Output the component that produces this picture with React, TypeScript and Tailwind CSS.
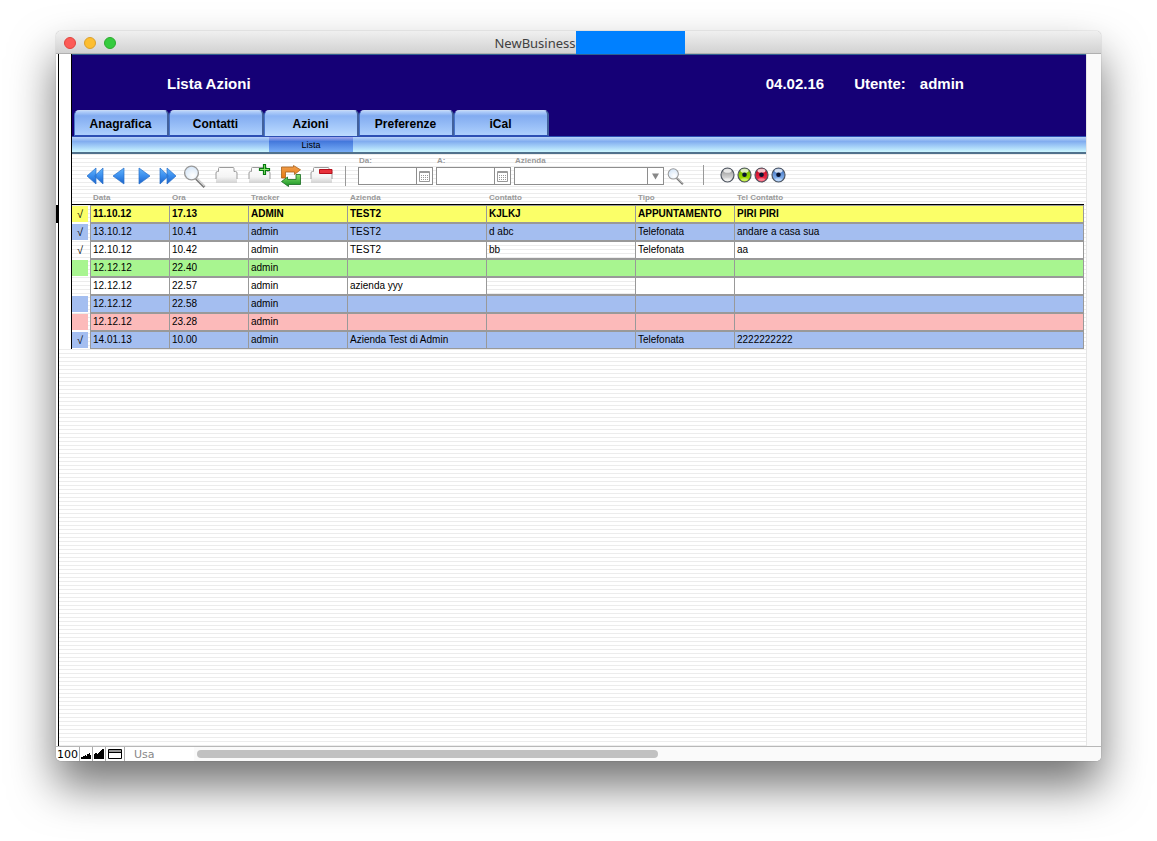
import React from "react";

type Tone = "yellow" | "blue" | "green" | "red" | "none";

interface Row {
  done: boolean;
  tone: Tone;
  cells: string[];
}

const rows: Row[] = [
  { done: true, tone: "yellow", cells: ["11.10.12", "17.13", "ADMIN", "TEST2", "KJLKJ", "APPUNTAMENTO", "PIRI PIRI"] },
  { done: true, tone: "blue", cells: ["13.10.12", "10.41", "admin", "TEST2", "d abc", "Telefonata", "andare a casa sua"] },
  { done: true, tone: "none", cells: ["12.10.12", "10.42", "admin", "TEST2", "bb", "Telefonata", "aa"] },
  { done: false, tone: "green", cells: ["12.12.12", "22.40", "admin", "", "", "", ""] },
  { done: false, tone: "none", cells: ["12.12.12", "22.57", "admin", "azienda yyy", "", "", ""] },
  { done: false, tone: "blue", cells: ["12.12.12", "22.58", "admin", "", "", "", ""] },
  { done: false, tone: "red", cells: ["12.12.12", "23.28", "admin", "", "", "", ""] },
  { done: true, tone: "blue", cells: ["14.01.13", "10.00", "admin", "Azienda Test di Admin", "", "Telefonata", "2222222222"] },
];

const tones: Record<Tone, string> = {
  yellow: "bg-[#fbff68]",
  blue: "bg-[#a4bef0]",
  green: "bg-[#a8f590]",
  red: "bg-[#fcbaba]",
  none: "bg-white",
};

const stripes = "bg-[repeating-linear-gradient(to_bottom,#ececec_0px,#ececec_1px,#ffffff_1px,#ffffff_4px)]";
const tabs = ["Anagrafica", "Contatti", "Azioni", "Preferenze", "iCal"];
const headings = ["Data", "Ora", "Tracker", "Azienda", "Contatto", "Tipo", "Tel Contatto"];

function Arrow({ d, label, width, className }: { d: string; label: string; width: number; className: string }) {
  return (
    <button type="button" aria-label={label} className={className}>
      <svg width={width} height="18" viewBox={`0 0 ${width} 18`} className="block">
        <defs>
          <linearGradient id="arrowFill" x1="0" y1="0" x2="0" y2="1">
            <stop offset="0" stopColor="#63b4fa" />
            <stop offset="0.5" stopColor="#3a8eee" />
            <stop offset="1" stopColor="#1c62c8" />
          </linearGradient>
        </defs>
        <path d={d} fill="url(#arrowFill)" stroke="#2a70c8" strokeWidth="0.7" />
      </svg>
    </button>
  );
}

function Magnifier({ size }: { size: number }) {
  return (
    <svg width={size} height={size} viewBox="0 0 23 23" className="block">
      <defs>
        <radialGradient id="lens" cx="0.6" cy="0.7" r="0.8">
          <stop offset="0" stopColor="#ffffff" />
          <stop offset="1" stopColor="#cfe2f6" />
        </radialGradient>
      </defs>
      <path d="M13 13.500L21.500 22" stroke="#777" strokeWidth="2.600" />
      <path d="M13.500 13L21.500 21" stroke="#ddd" strokeWidth="1.200" />
      <circle cx="8.500" cy="8" r="6.900" fill="url(#lens)" stroke="#999" strokeWidth="1.400" />
    </svg>
  );
}

function Folder({ kind }: { kind?: "add" | "remove" }) {
  return (
    <svg width="23" height="22" viewBox="0 0 23 22" className="block overflow-visible">
      <defs>
        <linearGradient id="folderFill" x1="0" y1="0" x2="0" y2="1">
          <stop offset="0" stopColor="#fdfdfd" />
          <stop offset="0.6" stopColor="#f4f4f4" />
          <stop offset="1" stopColor="#d2d2d2" />
        </linearGradient>
      </defs>
      <path d="M1 18V8Q1 6.500 2.500 6.500H3.500V3.500Q3.500 2.500 4.500 2.500H18Q19 2.500 19 3.500V6.500H20.500Q22 6.500 22 8V18Z" fill="url(#folderFill)" />
      <path d="M1 14V8Q1 6.500 2.500 6.500H3.500V3.500Q3.500 2.500 4.500 2.500H18Q19 2.500 19 3.500V6.500H20.500Q22 6.500 22 8V14" fill="none" stroke="#9c9c9c" />
      {kind === "add" && (
        <path d="M15.500 -0.500H17.500V3.500H21.500V5.500H17.500V9.500H15.500V5.500H11.500V3.500H15.500Z" fill="#8bea6a" stroke="#087a10" strokeWidth="1.200" />
      )}
      {kind === "remove" && <path d="M9.500 4.500H22V8.500H9.500Z" fill="#e8313a" stroke="#b5101c" />}
    </svg>
  );
}

function Refresh() {
  return (
    <svg width="22" height="22" viewBox="0 0 22 22" className="block">
      <defs>
        <linearGradient id="orange" x1="0" y1="0" x2="0" y2="1">
          <stop offset="0" stopColor="#f0a050" />
          <stop offset="1" stopColor="#e87910" />
        </linearGradient>
        <linearGradient id="green" x1="0" y1="0" x2="0" y2="1">
          <stop offset="0" stopColor="#8ae470" />
          <stop offset="1" stopColor="#139020" />
        </linearGradient>
      </defs>
      <path d="M1.500 13V2H13.500V0.500L20.500 4.800L14.500 9.500V7H5.500V13Z" fill="url(#orange)" stroke="#a8611a" strokeWidth="0.800" />
      <path d="M20.500 9.500V19.500H8.500V21.500L1.500 16.500L7.500 12V14.500H16V9.500Z" fill="url(#green)" stroke="#176a20" strokeWidth="0.800" />
    </svg>
  );
}

function Orb({ id, light, dark, pupil, label }: { id: string; light: string; dark: string; pupil: boolean; label: string }) {
  return (
    <button type="button" aria-label={label}>
      <svg width="15" height="16" viewBox="0 0 15 16" className="block">
        <defs>
          <linearGradient id={id} x1="0" y1="0" x2="0" y2="1">
            <stop offset="0" stopColor={dark} />
            <stop offset="1" stopColor={light} />
          </linearGradient>
        </defs>
        <ellipse cx="7.500" cy="8" rx="6.500" ry="7" fill={`url(#${id})`} stroke="#4e5560" strokeWidth="1.200" />
        <ellipse cx="7.500" cy="3.800" rx="4" ry="2" fill="#fff" opacity="0.75" />
        <ellipse cx="7.500" cy="12.600" rx="3.500" ry="1.300" fill="#fff" opacity="0.4" />
        {pupil && <circle cx="7.500" cy="7.700" r="2.300" fill="#071230" />}
      </svg>
    </button>
  );
}

function DateField({ id, label }: { id: string; label: string }) {
  return (
    <div className="mr-[3px] w-[75px]">
      <label htmlFor={id} className="block h-3 pl-px text-[8px] leading-3 font-bold text-[#999]">
        {label}
      </label>
      <div className="flex h-[18px] border border-[#8e8e8e] bg-white">
        <input id={id} className="w-0 flex-1 px-1 text-[10px] outline-none" />
        <button type="button" aria-label={`Calendario ${label}`} className="flex w-4 items-center justify-center border-l border-[#8e8e8e]">
          <svg width="11" height="11" viewBox="0 0 11 11" className="block">
            <path d="M0.500 0.500H10.500V10.500H0.500Z" fill="#fff" stroke="#999" />
            <path d="M1 1.500H10" stroke="#999" />
            <path d="M2 4.500H9M2 6.500H9M2 8.500H9" stroke="#999" strokeDasharray="1 1" />
          </svg>
        </button>
      </div>
    </div>
  );
}

function Tab({ label, active }: { label: string; active: boolean }) {
  return (
    <button
      type="button"
      className={`h-full w-[95px] rounded-t-[5px] border-r-2 border-l border-t border-t-[#c5d8f5] border-r-[#42619c] border-l-[#4874c8] pr-px text-center text-xs font-bold text-black ${
        active
          ? "bg-linear-to-b from-[#b9d3fa] via-[#8cb4f4] via-20% to-[#bddcff] pt-px"
          : "border-b border-b-[#2c4fb4] bg-linear-to-b from-[#b9d3fa] via-[#82abf0] via-20% to-[#add0fd] pt-0.5"
      }`}
    >
      {label}
    </button>
  );
}

function Toolbar() {
  return (
    <div className={`h-[35px] ${stripes}`}>
      <div className="flex h-full items-end pb-1 pl-[14px]">
        <div className="flex h-[18px] items-center">
          <Arrow label="Primo" width={18} className="mr-2" d="M1 9L10 1V17ZM8.500 9L17 1V17Z" />
          <Arrow label="Precedente" width={13} className="mr-[13px]" d="M1 9L12 1V17Z" />
          <Arrow label="Successivo" width={13} className="mr-2" d="M1 1L12 9L1 17Z" />
          <Arrow label="Ultimo" width={18} className="mr-1.5" d="M1 1L9.500 9L1 17ZM8 1L17 9L8 17Z" />
          <button type="button" aria-label="Cerca" className="mr-[9px]"><Magnifier size={23} /></button>
          <button type="button" aria-label="Apri" className="mr-[10px]"><Folder /></button>
          <button type="button" aria-label="Nuovo" className="mr-[9px]"><Folder kind="add" /></button>
          <button type="button" aria-label="Aggiorna" className="mr-2"><Refresh /></button>
          <button type="button" aria-label="Elimina" className="mr-3"><Folder kind="remove" /></button>
          <div className="mr-3 h-5 w-px bg-[#999]" />
        </div>
        <DateField id="from" label="Da:" />
        <DateField id="to" label="A:" />
        <div className="mr-[3px] w-[150px]">
          <label htmlFor="company" className="block h-3 pl-px text-[8px] leading-3 font-bold text-[#999]">Azienda</label>
          <div className="relative h-[18px] border border-[#8e8e8e] bg-white">
            <select id="company" className="block h-full w-full appearance-none text-[10px] outline-none">
              <option value=""></option>
            </select>
            <span className="pointer-events-none absolute inset-y-0 right-0 flex w-4 items-center justify-center border-l border-[#8e8e8e]">
              <svg width="9" height="7" viewBox="0 0 9 7"><path d="M1 0.500H8L4.500 6.500Z" fill="#888" /></svg>
            </span>
          </div>
        </div>
        <button type="button" aria-label="Cerca azienda" className="mr-[19px]"><Magnifier size={17} /></button>
        <div className="mr-4 h-5 w-px bg-[#999]" />
        <div className="flex gap-0.5 pb-0.5">
          <Orb id="gray" label="Tutti" light="#f4f4f4" dark="#8a8a8a" pupil={false} />
          <Orb id="lime" label="Verde" light="#b4f000" dark="#67a800" pupil />
          <Orb id="crimson" label="Rosso" light="#ff3858" dark="#b80018" pupil />
          <Orb id="azure" label="Blu" light="#9cc8ff" dark="#3468b8" pupil />
        </div>
      </div>
    </div>
  );
}

function ActionTable() {
  return (
    <div className={`pr-0.5 ${stripes}`}>
      <table className="w-full table-fixed border-separate border-spacing-0 text-left text-[10px]">
        <colgroup>
          <col className="w-[18px]" />
          <col className="w-[79px]" />
          <col className="w-[79px]" />
          <col className="w-[99px]" />
          <col className="w-[139px]" />
          <col className="w-[149px]" />
          <col className="w-[99px]" />
          <col />
        </colgroup>
        <thead>
          <tr className="h-4">
            <th className="border-b border-black p-0" aria-label="Fatto" />
            {headings.map((h) => (
              <th key={h} className="border-b border-black p-0 pt-0.5 pl-[3px] text-[8px] leading-[13px] font-bold text-[#999]">
                {h}
              </th>
            ))}
          </tr>
        </thead>
        <tbody>
          {rows.map((row, r) => (
            <tr key={r} className={`h-[18px] ${r === 0 ? "font-bold" : ""}`}>
              <td className="p-0 py-px pr-0.5">
                <div className={`h-4 text-center text-[11px] leading-4 font-normal ${row.tone === "none" ? "" : tones[row.tone]}`}>
                  {row.done ? "√" : ""}
                </div>
              </td>
              {row.cells.map((cell, c) => (
                <td
                  key={c}
                  className={`h-[18px] overflow-hidden border-y border-l border-[#999] p-0 pl-0.5 leading-4 whitespace-nowrap last:border-r ${
                    row.tone === "none" && c === 4 ? "" : tones[row.tone]
                  }`}
                >
                  {cell}
                </td>
              ))}
            </tr>
          ))}
        </tbody>
      </table>
    </div>
  );
}

export default function App() {
  return (
    <div className="flex min-h-screen flex-col bg-white px-14 pt-[31px] pb-20 font-['Liberation_Sans',Arial,sans-serif] text-black">
      <div className="flex flex-1 flex-col overflow-hidden rounded-[5px] bg-white shadow-[0_0_1px_rgba(0,0,0,0.5),0_25px_45px_rgba(0,0,0,0.55)]">
        <div className="flex h-[23px] items-center border-b border-[#b0b0b0] bg-linear-to-b from-[#f0f0f0] to-[#d2d2d2] pr-[38px] pl-2">
          <div className="flex gap-2 pt-px">
            <button type="button" aria-label="Chiudi" className="size-3 rounded-full border border-[#e0443e] bg-[#fc5b57]" />
            <button type="button" aria-label="Riduci" className="size-3 rounded-full border border-[#dba02c] bg-[#fdbe30]" />
            <button type="button" aria-label="Ingrandisci" className="size-3 rounded-full border border-[#2cab2d] bg-[#35cb3e]" />
          </div>
          <div className="flex h-full flex-1 items-center justify-center">
            <h1 className="pt-1 font-['Noto_Sans',sans-serif] text-[13px] text-[#404040]">NewBusiness</h1>
            <div className="h-[23px] w-[109px] bg-[#0080ff]" />
          </div>
        </div>

        <div className="flex flex-1">
          <div className="ml-0.5 flex min-w-0 flex-1 flex-col border-l border-black">
            <div className="relative ml-3 border-l border-black">
              <header className="border-t border-[#2f5f8f] bg-[#150076]">
                <div className="flex h-[55px] items-center pt-1 pr-[122px] pl-[95px] text-[15px] font-bold text-white">
                  <h2 className="flex-1">Lista Azioni</h2>
                  <span className="mr-[30px]">04.02.16</span>
                  <span className="mr-[14px]">Utente:</span>
                  <span>admin</span>
                </div>
                <nav className="flex h-[27px] border-b border-[#2c4fb4] pl-0.5">
                  {tabs.map((t) => (
                    <Tab key={t} label={t} active={t === "Azioni"} />
                  ))}
                </nav>
              </header>
              <div className="flex h-[17px] border-b-2 border-[#50718c] bg-linear-to-b from-[#b9d4f8] via-[#82adef] via-30% to-[#cdf7ff] pl-[197px]">
                <button type="button" className="w-[84px] bg-linear-to-b from-[#a7a9ed] via-[#4478dc] via-30% to-[#78adf6] pt-0.5 text-[9px] leading-[13px]">
                  Lista
                </button>
              </div>
              <Toolbar />
              <ActionTable />
              <div className="absolute top-[151px] -left-[16px] h-[18px] w-[3px] bg-black" />
            </div>
            <div className={`flex-1 ${stripes}`} />
          </div>
          <div className="w-[15px] border-l border-[#e6e6e6] bg-[#fafafa]" />
        </div>

        <footer className="flex h-[15px] border-t border-[#b8b8b8] bg-white font-['DejaVu_Sans',sans-serif] text-[11px] leading-[14px]">
          <button type="button" className="w-6 border-r border-[#aaa] text-center leading-4">100</button>
          <button type="button" aria-label="Riduci zoom" className="flex w-[13px] items-end justify-center border-r border-[#aaa] pb-0.5">
            <svg width="10" height="6" viewBox="0 0 10 6"><path d="M0 6V4H2V3H4V2H5V3H6V1H8V0H9V2H10V6Z" /></svg>
          </button>
          <button type="button" aria-label="Aumenta zoom" className="flex w-[13px] items-end justify-center border-r border-[#aaa] pb-0.5">
            <svg width="10" height="10" viewBox="0 0 10 10"><path d="M0 10V5H1V4H3V5H4V4H5V3H6V2H7V1H8V0H10V10Z" /></svg>
          </button>
          <button type="button" aria-label="Area stato" className="flex w-[19px] items-center justify-center border-r border-[#aaa]">
            <svg width="14" height="10" viewBox="0 0 14 10"><path d="M0.500 0.500H13.500V9.500H0.500Z" fill="#fff" stroke="#000" /><path d="M1 1H13V3H1Z" fill="#999" /><path d="M1 3.500H13" stroke="#000" /></svg>
          </button>
          <button type="button" className="w-[69px] pl-[9px] text-left leading-4 text-[#888]">Usa</button>
          <div className="flex flex-1 items-center bg-[#fafafa] pl-[3px]">
            <div className="h-2 w-[51%] rounded-full bg-[#c1c1c1]" />
          </div>
        </footer>
      </div>
    </div>
  );
}
